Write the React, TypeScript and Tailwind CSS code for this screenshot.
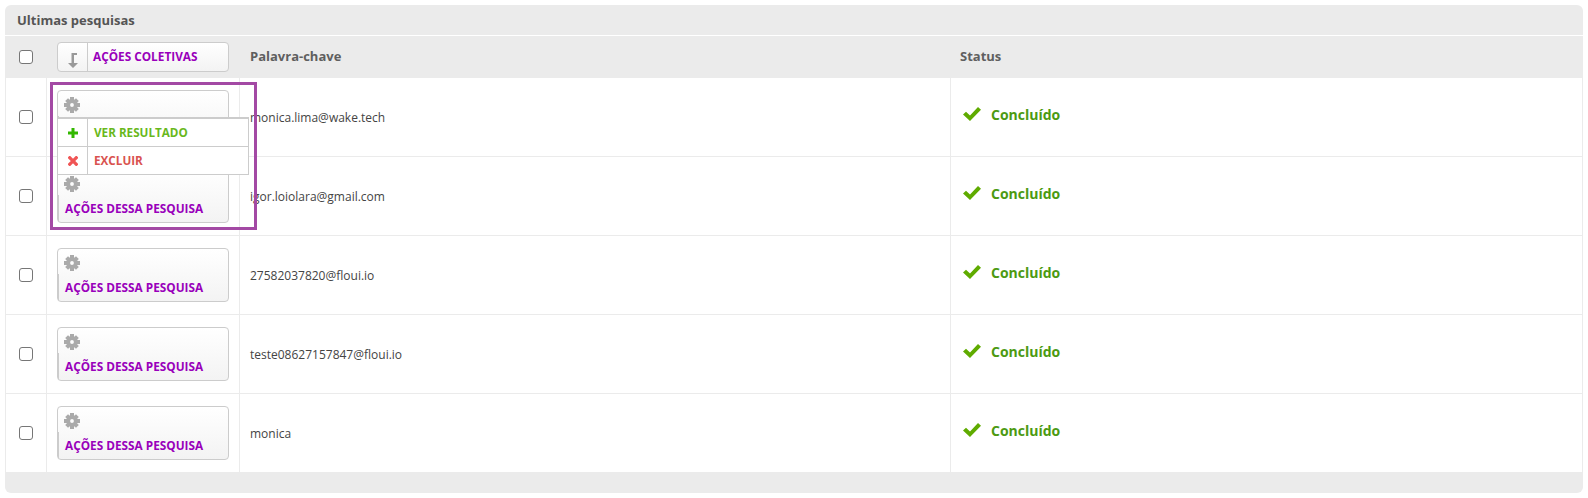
const rows = [
  { keyword: "monica.lima@wake.tech" },
  { keyword: "igor.loiolara@gmail.com" },
  { keyword: "27582037820@floui.io" },
  { keyword: "teste08627157847@floui.io" },
  { keyword: "monica" },
];

function Checkbox() {
  return <span className="block h-[14px] w-[14px] rounded-[3px] border border-[#767676] bg-white" />;
}

function GearIcon() {
  return (
    <svg viewBox="0 0 16 16" className="h-4 w-4 fill-[#aaa] stroke-[#aaa]">
      <circle cx="8" cy="8" r="3.9" fill="none" strokeWidth="4" />
      <g stroke="none">
        <rect x="6" y="0" width="4" height="4" />
        <rect x="6" y="12" width="4" height="4" />
        <rect x="0" y="6" width="4" height="4" />
        <rect x="12" y="6" width="4" height="4" />
        <rect x="6" y="0.4" width="4" height="4" transform="rotate(45 8 8)" />
        <rect x="6" y="11.6" width="4" height="4" transform="rotate(45 8 8)" />
        <rect x="0.4" y="6" width="4" height="4" transform="rotate(45 8 8)" />
        <rect x="11.6" y="6" width="4" height="4" transform="rotate(45 8 8)" />
      </g>
    </svg>
  );
}

function ActionsButton({ label }: { label: string }) {
  return (
    <div className="flex h-[54px] w-[172px] flex-col rounded border border-[#ccc] bg-gradient-to-b from-white to-[#f3f3f3]">
      <div className="mt-[6px] ml-[6px]">
        <GearIcon />
      </div>
      <div className="mt-[3px] mb-px flex flex-1 items-center border-l border-[#ccc] pt-[2px] pl-[6px]">
        <span className="text-[11.8px] font-bold text-[#9900bb]">{label}</span>
      </div>
    </div>
  );
}

function Dropdown() {
  return (
    <div className="absolute top-[27px] left-0 z-10 w-[192px] border border-t-2 border-[#ccc] bg-white text-[11.7px] font-bold">
      <div className="flex h-[28px] items-center border-b border-[#ccc]">
        <span className="flex h-full w-[30px] items-center justify-center border-r border-[#ccc]">
          <svg viewBox="0 0 10 10" className="h-[10px] w-[10px] fill-[#33b800]">
            <path d="M3.5 0H6.5V3.5H10V6.5H6.5V10H3.5V6.5H0V3.5H3.5Z" />
          </svg>
        </span>
        <span className="pl-[6px] text-[#69b81c]">VER RESULTADO</span>
      </div>
      <div className="flex h-[27px] items-center">
        <span className="flex h-full w-[30px] items-center justify-center border-r border-[#ccc]">
          <svg viewBox="0 0 10 10" className="h-[10px] w-[10px] stroke-[#f05555]" strokeWidth="3.2">
            <path d="M0.6 0.6L9.4 9.4M9.4 0.6L0.6 9.4" />
          </svg>
        </span>
        <span className="pl-[6px] text-[#d9534f]">EXCLUIR</span>
      </div>
    </div>
  );
}

export default function App() {
  return (
    <div className="h-[498px] w-[1588px] bg-white p-[5px] font-['Open_Sans','Noto_Sans',sans-serif] text-[12px] text-[#444]">
      <div className="relative w-[1578px]">
        <div className="flex h-[30px] items-center rounded-t-md bg-[#ebebeb] pt-px pl-3 text-[13px] font-bold text-[#555]">
          Ultimas pesquisas
        </div>

        {/* Table head */}
        <div className="mt-px grid h-[42px] grid-cols-[41px_193px_710px_1fr] items-center bg-[#ebebeb] text-[13px] font-bold text-[#5f5f5f]">
          <div className="flex justify-center">
            <Checkbox />
          </div>
          <div className="pl-[11px]">
            <div className="flex h-[30px] w-[172px] items-center rounded border border-[#ccc] bg-gradient-to-b from-white to-[#f3f3f3]">
              <span className="flex h-full w-[30px] items-center justify-center border-r border-[#ccc]">
                <svg viewBox="0 0 14 16" className="mt-[6px] h-4 w-[14px] fill-[#999]">
                  <path d="M5.5 1H11V3H8V11H12L7 16L2 11H5.5Z" />
                </svg>
              </span>
              <span className="pl-[5px] text-[11.8px] text-[#9900bb]">AÇÕES COLETIVAS</span>
            </div>
          </div>
          <div className="pl-[11px]">Palavra-chave</div>
          <div className="pl-[11px]">Status</div>
        </div>

        {/* Rows */}
        <div className="border-x border-[#ebebeb]">
          {rows.map((row, i) => (
            <div
              key={row.keyword}
              className="grid h-[79px] grid-cols-[40px_193px_711px_1fr] border-b border-[#ebebeb] last:h-[78px] last:border-b-0"
            >
              <div className="flex items-center justify-center">
                <Checkbox />
              </div>
              <div className="border-l border-[#ebebeb] pt-3 pl-[10px]">
                <div className="relative">
                  <ActionsButton label={i === 0 ? "" : "AÇÕES DESSA PESQUISA"} />
                  {i === 0 && <Dropdown />}
                </div>
              </div>
              <div className="flex items-center border-l border-[#ebebeb] pt-[2px] pl-[10px]">{row.keyword}</div>
              <div className="flex items-center border-l border-[#ebebeb] pb-[6px] pl-[12px] text-[14px] font-bold text-[#4c9a12]">
                <svg viewBox="0 0 18 14" className="mr-[10px] h-[14px] w-[18px] fill-[#5fab00]">
                  <path d="M0 7.5L3 4.7L7 8.6L15 0L18 2.8L7 14Z" />
                </svg>
                Concluído
              </div>
            </div>
          ))}
        </div>

        <div className="h-[21px] rounded-b-md bg-[#ebebeb]" />

        {/* Highlight drawn over the screenshot */}
        <div className="pointer-events-none absolute top-[77px] left-[45px] z-20 h-[148px] w-[207px] border-[3px] border-[#a349a4]" />
      </div>
    </div>
  );
}
